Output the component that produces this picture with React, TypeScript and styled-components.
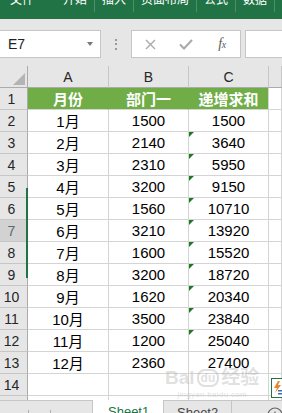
import React from 'react';
import styled, { createGlobalStyle, css } from 'styled-components';

const Global = createGlobalStyle`
  html, body { margin: 0; padding: 0; background: #fff; overflow: hidden; }
  body { font-family: "Liberation Sans", "Noto Sans CJK SC", sans-serif; }
  * { box-sizing: border-box; }
`;

const Page = styled.div`
  width: 282px;
  height: 413px;
  display: flex;
  flex-direction: column;
  overflow: hidden;
`;

const Ribbon = styled.div`
  height: 19px;
  flex: none;
  background: #217346;
  display: flex;
  align-items: flex-start;
  padding-left: 3px;
`;

const RibbonTab = styled.div<{ $sep?: boolean; $gap?: number }>`
  height: 12px;
  overflow: hidden;
  padding: 0 7px;
  color: #fff;
  font-size: 12px;
  font-family: "Noto Sans CJK SC", sans-serif;
  border-right: 1px solid ${(p) => (p.$sep ? '#4a9169' : 'transparent')};
  margin-right: ${(p) => p.$gap ?? 0}px;
  flex: none;
`;

const RibbonLabel = styled.span`
  display: block;
  line-height: 12px;
  margin-top: -7px;
  white-space: nowrap;
`;

const FormulaRow = styled.div`
  height: 47px;
  flex: none;
  background: #e6e6e6;
  display: flex;
  align-items: flex-start;
  padding-top: 11px;
`;

const NameBox = styled.div`
  width: 102px;
  height: 28px;
  margin-left: -1px;
  flex: none;
  background: #fff;
  border: 1px solid #c6c6c6;
  display: flex;
  align-items: center;
  justify-content: space-between;
  padding: 0 7px 0 8px;
  font-size: 14px;
  color: #222;
`;

const DropArrow = styled.span`
  width: 0;
  height: 0;
  border-left: 3.5px solid transparent;
  border-right: 3.5px solid transparent;
  border-top: 4px solid #777;
`;

const Dots = styled.div`
  width: 2px;
  height: 28px;
  margin: 0 14px 0 14px;
  display: flex;
  flex-direction: column;
  justify-content: center;
  gap: 2.5px;
  flex: none;
`;

const Dot = styled.span`
  width: 2px;
  height: 2px;
  background: #9a9a9a;
`;

const ButtonBox = styled.div`
  width: 110px;
  height: 28px;
  flex: none;
  background: #fff;
  border: 1px solid #c6c6c6;
  display: grid;
  grid-template-columns: repeat(3, 1fr);
  align-items: center;
  justify-items: center;
`;

const Fx = styled.span`
  font-family: "Liberation Serif", serif;
  font-style: italic;
  font-size: 14px;
  color: #5a5a5a;
  letter-spacing: -0.5px;
  small { font-size: 10px; }
`;

const FormulaInput = styled.div`
  flex: 1;
  height: 28px;
  margin-left: 4px;
  margin-right: -1px;
  background: #fff;
  border: 1px solid #c6c6c6;
`;

const SheetArea = styled.div`
  flex: 1;
  position: relative;
  overflow: hidden;
  background: #fff;
`;

const Grid = styled.div`
  display: grid;
  grid-template-columns: 28px 81px 80px 80px 1fr;
  grid-auto-rows: 22px;
`;

const headerBase = css`
  background: #e6e6e6;
  display: flex;
  align-items: center;
  justify-content: center;
  color: #262626;
`;

const Corner = styled.div`
  ${headerBase};
  position: relative;
  border-right: 1px solid #ababab;
  border-bottom: 1px solid #ababab;
  svg { position: absolute; right: 2px; bottom: 2px; }
`;

const ColHeader = styled.div`
  ${headerBase};
  font-size: 14px;
  border-right: 1px solid #c6c6c6;
  border-bottom: 1px solid #ababab;
`;

const RowHeader = styled.div<{ $active?: boolean }>`
  ${headerBase};
  font-size: 14px;
  padding-right: 4px;
  border-right: 1px solid #ababab;
  border-bottom: 1px solid #c6c6c6;
  ${(p) =>
    p.$active &&
    css`
      background: #d2d2d2;
      color: #5f6670;
    `}
`;

const Cell = styled.div<{ $head?: boolean; $flag?: boolean; $last?: boolean }>`
  position: relative;
  display: flex;
  align-items: center;
  justify-content: center;
  font-size: 15px;
  color: #000;
  border-right: 1px solid #d4d4d4;
  border-bottom: 1px solid #d4d4d4;
  ${(p) =>
    p.$head &&
    css`
      background: #70ad47;
      color: #fff;
      font-weight: bold;
      font-family: "Noto Sans CJK SC", sans-serif;
      font-size: 15px;
      border-right-color: ${p.$last ? '#d4d4d4' : '#70ad47'};
    `}
  ${(p) =>
    p.$flag &&
    css`
      &::before {
        content: '';
        position: absolute;
        left: 0;
        top: 0;
        border-top: 5px solid #1f7a1f;
        border-right: 5px solid transparent;
      }
    `}
`;

const SelectionMark = styled.div`
  position: absolute;
  left: 26px;
  top: 122px;
  width: 2px;
  height: 90px;
  background: #217346;
`;

const Watermark = styled.div`
  position: absolute;
  left: 165px;
  top: 300px;
  display: flex;
  flex-direction: column;
  align-items: center;
  color: rgba(175, 175, 175, 0.4);
  pointer-events: none;
  white-space: nowrap;
`;

const WaterLogo = styled.div`
  display: flex;
  align-items: center;
  gap: 2px;
  font-size: 19px;
  font-weight: bold;
  line-height: 24px;
  font-family: "Liberation Sans", "Noto Sans CJK SC", sans-serif;
`;

const WaterPaw = styled.span`
  font-size: 12px;
  border: 2px solid rgba(175, 175, 175, 0.4);
  border-radius: 8px;
  padding: 0 2px;
  line-height: 14px;
`;

const WaterUrl = styled.div`
  font-size: 8px;
  line-height: 9px;
  letter-spacing: 0.3px;
`;

const QuickIcon = styled.div`
  position: absolute;
  left: 271px;
  top: 312px;
  width: 14px;
  height: 20px;
  background: #fff;
  border: 1px solid #217346;
`;

const TabBar = styled.div`
  height: 13px;
  flex: none;
  display: flex;
  background: #e6e6e6;
  border-top: 1px solid #c6c6c6;
`;

const NavArea = styled.div`
  width: 92px;
  flex: none;
  position: relative;
  display: flex;
  padding-left: 28px;
  gap: 21px;
  padding-top: 9px;
`;

const Tick = styled.span`
  width: 1px;
  height: 4px;
  background: #b0b0b0;
`;

const SheetTab = styled.div<{ $active?: boolean; $w: number }>`
  width: ${(p) => p.$w}px;
  flex: none;
  font-size: 13px;
  line-height: 13px;
  padding-top: 5px;
  padding-left: ${(p) => (p.$active ? 15 : 13)}px;
  border-left: 1px solid #c6c6c6;
  color: #444;
  ${(p) =>
    p.$active &&
    css`
      background: #fff;
      color: #217346;
      margin-top: -1px;
    `}
  ${(p) =>
    !p.$active &&
    css`
      border-right: 1px solid #c6c6c6;
    `}
`;

const AddButton = styled.div`
  margin-left: 35px;
  padding-top: 6px;
`;

const months = ['1月', '2月', '3月', '4月', '5月', '6月', '7月', '8月', '9月', '10月', '11月', '12月'];
const dept = [1500, 2140, 2310, 3200, 1560, 3210, 1600, 3200, 1620, 3500, 1200, 2360];
const cum = [1500, 3640, 5950, 9150, 10710, 13920, 15520, 18720, 20340, 23840, 25040, 27400];

const ribbonTabs: { label: string; sep?: boolean; gap?: number }[] = [
  { label: '文件', gap: 14 },
  { label: '开始', sep: true },
  { label: '插入', sep: true },
  { label: '页面布局', sep: true },
  { label: '公式', sep: true },
  { label: '数据', sep: true },
];

export default function App() {
  return (
    <Page>
      <Global />
      <Ribbon>
        {ribbonTabs.map((t) => (
          <RibbonTab key={t.label} $sep={t.sep} $gap={t.gap}>
            <RibbonLabel>{t.label}</RibbonLabel>
          </RibbonTab>
        ))}
      </Ribbon>
      <FormulaRow>
        <NameBox>
          <span>E7</span>
          <DropArrow />
        </NameBox>
        <Dots>
          <Dot />
          <Dot />
          <Dot />
        </Dots>
        <ButtonBox>
          <svg width="11" height="11" viewBox="0 0 11 11">
            <path d="M1 1 L10 10 M10 1 L1 10" stroke="#a9a9a9" strokeWidth="1.4" fill="none" />
          </svg>
          <svg width="14" height="11" viewBox="0 0 14 11">
            <path d="M1 5.5 L5 9.5 L13 1" stroke="#a9a9a9" strokeWidth="2" fill="none" />
          </svg>
          <Fx>
            f<small>x</small>
          </Fx>
        </ButtonBox>
        <FormulaInput />
      </FormulaRow>
      <SheetArea>
        <Grid>
          <Corner>
            <svg width="12" height="12" viewBox="0 0 12 12">
              <polygon points="12,0 12,12 0,12" fill="#b4b4b4" />
            </svg>
          </Corner>
          <ColHeader>A</ColHeader>
          <ColHeader>B</ColHeader>
          <ColHeader>C</ColHeader>
          <ColHeader />

          <RowHeader>1</RowHeader>
          <Cell $head>月份</Cell>
          <Cell $head>部门一</Cell>
          <Cell $head $last>递增求和</Cell>
          <Cell />

          {months.map((m, i) => (
            <React.Fragment key={m}>
              <RowHeader $active={i + 2 === 7}>{i + 2}</RowHeader>
              <Cell>{m}</Cell>
              <Cell>{dept[i]}</Cell>
              <Cell $flag={i >= 1 && i <= 10}>{cum[i]}</Cell>
              <Cell />
            </React.Fragment>
          ))}

          {[14, 15].map((n) => (
            <React.Fragment key={n}>
              <RowHeader>{n}</RowHeader>
              <Cell />
              <Cell />
              <Cell />
              <Cell />
            </React.Fragment>
          ))}
        </Grid>
        <SelectionMark />
        <Watermark>
          <WaterLogo>
            <span>Bai</span>
            <WaterPaw>du</WaterPaw>
            <span>经验</span>
          </WaterLogo>
          <WaterUrl>jingyan.baidu.com</WaterUrl>
        </Watermark>
        <QuickIcon>
          <svg width="12" height="18" viewBox="0 0 12 18">
            <path d="M6 2 L2 9 L5 9 L3 14 L9 6 L6 6 L8 2 Z" fill="#e8862a" />
            <rect x="6" y="11" width="5" height="1.5" fill="#3b6fb6" />
            <rect x="6" y="14" width="5" height="1.5" fill="#3b6fb6" />
          </svg>
        </QuickIcon>
      </SheetArea>
      <TabBar>
        <NavArea>
          <Tick />
          <Tick />
        </NavArea>
        <SheetTab $active $w={71}>
          Sheet1
        </SheetTab>
        <SheetTab $w={69}>Sheet2</SheetTab>
        <AddButton>
          <svg width="16" height="16" viewBox="0 0 16 16">
            <circle cx="8" cy="8" r="7" stroke="#666" strokeWidth="1.2" fill="none" />
            <path d="M8 4.5 V11.5 M4.5 8 H11.5" stroke="#666" strokeWidth="1.2" />
          </svg>
        </AddButton>
      </TabBar>
    </Page>
  );
}
